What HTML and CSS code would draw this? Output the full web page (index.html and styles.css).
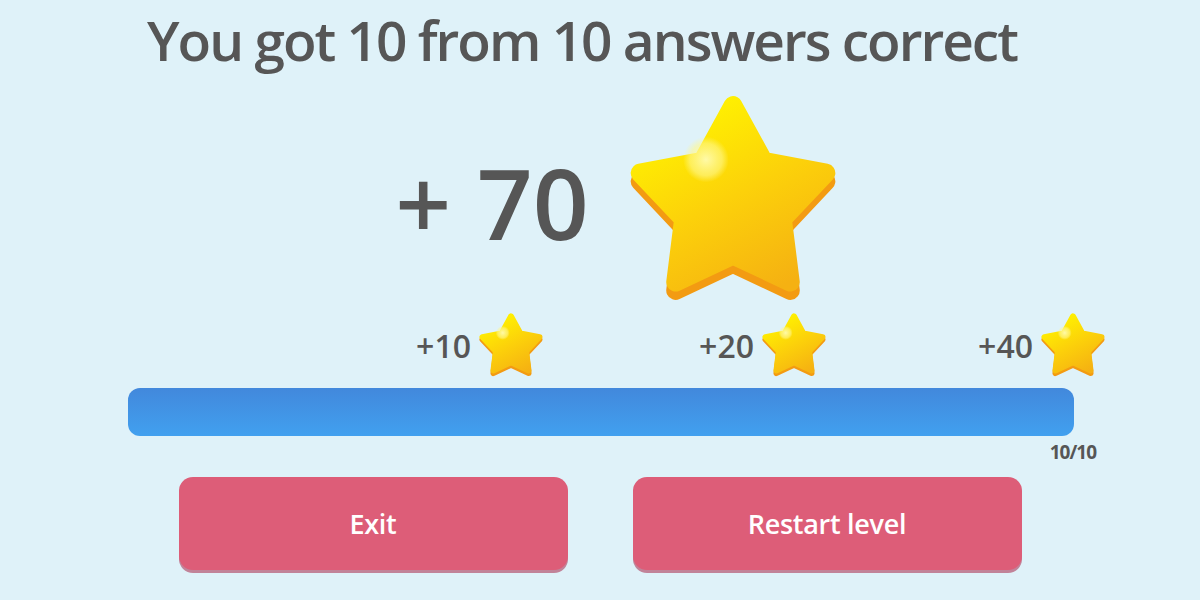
FILE: index.html
```html
<!doctype html>
<html lang="en">
    <head>
        <meta charset="UTF-8" />
        <meta name="viewport" content="width=device-width, initial-scale=1.0" />
        <title>Level complete</title>
        <link rel="stylesheet" href="styles.css">
    </head>
    <body>
        <!-- shared star shape -->
        <svg class="defs" aria-hidden="true">
            <defs>
                <linearGradient id="star-fill" x1="0.25" y1="0" x2="0.8" y2="1">
                    <stop offset="0" stop-color="#fff400" />
                    <stop offset="0.5" stop-color="#fcd10a" />
                    <stop offset="1" stop-color="#f5b112" />
                </linearGradient>
                <radialGradient id="star-shine" cx="0.5" cy="0.5" r="0.5">
                    <stop offset="0" stop-color="#fffbb0" stop-opacity="0.95" />
                    <stop offset="0.7" stop-color="#fff890" stop-opacity="0.6" />
                    <stop offset="1" stop-color="#fff890" stop-opacity="0" />
                </radialGradient>
                <symbol id="star" viewBox="0 0 100 100">
                    <polygon class="star-base" transform="translate(0 4)"
                        points="50,5 64.7,31.8 94.7,37.5 73.8,59.7 77.6,90 50,77 22.4,90 26.2,59.7 5.3,37.5 35.3,31.8" />
                    <polygon class="star-face"
                        points="50,5 64.7,31.8 94.7,37.5 73.8,59.7 77.6,90 50,77 22.4,90 26.2,59.7 5.3,37.5 35.3,31.8" />
                    <circle cx="37" cy="31" r="11" fill="url(#star-shine)" />
                </symbol>
            </defs>
        </svg>

        <main class="screen">
            <h1 class="title">You got 10 from 10 answers correct</h1>

            <div class="score">
                <span class="score-value">+ 70</span>
                <svg class="star star-big"><use href="#star" /></svg>
            </div>

            <div class="milestones">
                <div class="milestone">
                    <span>+10</span>
                    <svg class="star star-small"><use href="#star" /></svg>
                </div>
                <div class="milestone">
                    <span>+20</span>
                    <svg class="star star-small"><use href="#star" /></svg>
                </div>
                <div class="milestone">
                    <span>+40</span>
                    <svg class="star star-small"><use href="#star" /></svg>
                </div>
            </div>

            <div class="progress">
                <div class="progress-fill" style="width: 100%"></div>
            </div>
            <div class="progress-count">10/10</div>

            <div class="actions">
                <button class="action">Exit</button>
                <button class="action">Restart level</button>
            </div>
        </main>
    </body>
</html>
```

FILE: styles.css
```css
body {
    margin: 0;
    background: #dff2f9;
    font-family: "Open Sans", "Noto Sans", sans-serif;
    color: #565656;
}
.defs {
    display: block;
    width: 0;
    height: 0;
}
.screen {
    width: 1200px;
    height: 600px;
    padding-top: 12px;
    box-sizing: border-box;
    overflow: hidden;
}
.title {
    margin: 0;
    padding-right: 36px;
    font-size: 55px;
    font-weight: 600;
    line-height: 56px;
    letter-spacing: -2px;
    text-align: center;
}
.score {
    display: flex;
    align-items: center;
    justify-content: center;
    gap: 40px;
    margin-top: 27px;
    padding-left: 32px;
}
.score-value {
    font-size: 98px;
    font-weight: 600;
    line-height: 1;
    margin-top: 6px;
}
.star-face {
    fill: url(#star-fill);
    stroke: url(#star-fill);
    stroke-width: 9;
    stroke-linejoin: round;
}
.star-base {
    fill: #f39b12;
    stroke: #f39b12;
    stroke-width: 9;
    stroke-linejoin: round;
}
.star-big {
    width: 208px;
    height: 208px;
}
.star-small {
    width: 64px;
    height: 64px;
}
.milestones {
    display: grid;
    grid-template-columns: 415px 283px 279px;
    margin: 10px 0 0 128px;
}
.milestone {
    display: flex;
    align-items: center;
    justify-content: flex-end;
    gap: 8px;
    font-size: 32px;
    font-weight: 600;
}
.progress {
    width: 946px;
    height: 48px;
    margin: 11px 0 0 128px;
    border-radius: 12px;
    overflow: hidden;
}
.progress-fill {
    height: 100%;
    background: linear-gradient(#4288dc, #41a0ef);
}
.progress-count {
    width: 1096px;
    margin-top: 7px;
    text-align: right;
    font-size: 19px;
    font-weight: 700;
    line-height: 19px;
    letter-spacing: -1px;
}
.actions {
    display: flex;
    justify-content: center;
    gap: 65px;
    margin-top: 15px;
}
.action {
    width: 389px;
    height: 93px;
    border: none;
    border-radius: 14px;
    background: #dd5d78;
    box-shadow: 0 3px 0 #c18399;
    color: #fff;
    font-family: inherit;
    font-size: 27px;
    font-weight: 600;
    letter-spacing: -0.3px;
    cursor: pointer;
}
```
